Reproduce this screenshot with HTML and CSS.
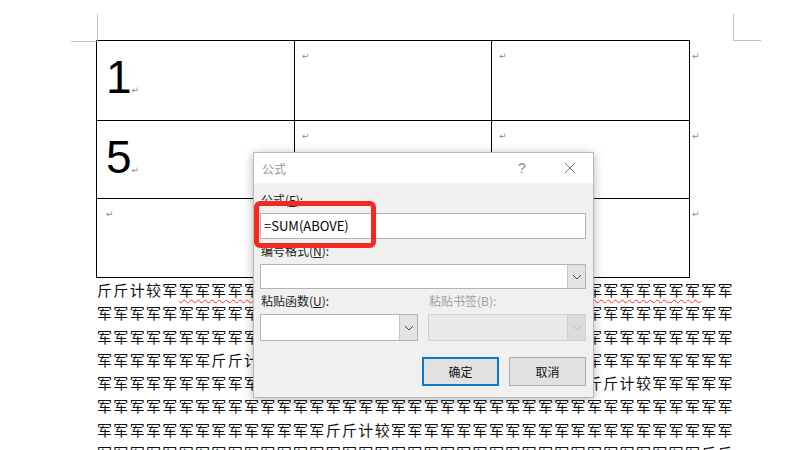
FILE: index.html
```html
<!DOCTYPE html>
<html lang="zh-CN">
<head>
    <meta charset="UTF-8">
    <title>公式</title>
    <link rel="stylesheet" href="styles.css">
</head>
<body>
    <div class="sheet">
        <div class="table-wrap">
            <div class="cells">
                <div class="cell cell-first big-cell"><span class="big">1</span><span class="mark">↵</span></div>
                <div class="cell"><span class="mark">↵</span></div>
                <div class="cell"><span class="mark">↵</span></div>
                <div class="cell cell-first big-cell row-2"><span class="big">5</span><span class="mark">↵</span></div>
                <div class="cell row-2"><span class="mark">↵</span></div>
                <div class="cell row-2"><span class="mark">↵</span></div>
                <div class="cell cell-first row-3"><span class="mark">↵</span></div>
                <div class="cell row-3"><span class="mark">↵</span></div>
                <div class="cell row-3"><span class="mark">↵</span></div>
            </div>
            <div class="row-ends">
                <div class="end end-1"><span class="mark">↵</span></div>
                <div class="end end-2"><span class="mark">↵</span></div>
                <div class="end end-3"><span class="mark">↵</span></div>
            </div>
        </div>

        <div class="body-text">
            <div class="line">斤斤计较军<span class="wavy">军军军军军军军军军军<!---->军军军军军军军军军军<!---->军军军军军军军军军军<!---->军军</span>军军</div>
            <div class="line">军军军军军军军军军军<!---->军军军军军军军军军军<!---->军军军军军军军军军军<!---->军军军军军<!---->军军军军</div>
            <div class="line">军军军军军军军军军军<!---->军军军军军军军军军军<!---->军军军军军军军军军军<!---->军军军军军<!---->军军军军</div>
            <div class="line">军军军军军<!---->军军<!---->斤斤计较<!---->军军军军军军军军军军<!---->军军军军军军军军军军<!---->军军军军军<!---->军军军</div>
            <div class="line">军军军军军军军军军军<!---->军军军军军军军军军军<!---->军军军军军军军军军军<!---->斤斤计较<!---->军军军军军</div>
            <div class="line">军军军军军军军军军军<!---->军军军军军军军军军军<!---->军军军军军军军军军军<!---->军军军军军<!---->军军军军</div>
            <div class="line">军军军军军军军军军军<!---->军军军军<!---->斤斤计较<!---->军军军军军军军军军军<!---->军军军军军军军军军军<!---->军</div>
            <div class="line">军军军军军军军军军军<!---->军军军军军军军军军军<!---->军军军军军军军军军军<!---->军军军军军<!---->军军<!---->斤斤</div>
        </div>
    </div>

    <div class="dialog">
        <div class="title-bar">
            <span class="title">公式</span>
            <span class="title-btn help">?</span>
            <span class="title-btn">
                <svg width="12" height="12" viewBox="0 0 12 12"><path d="M1 1 L11 11 M11 1 L1 11" stroke="#7a7a7a" stroke-width="1" fill="none"/></svg>
            </span>
        </div>
        <div class="dialog-body">
            <div class="label">公式(<u>F</u>):</div>
            <div class="field formula">=SUM(ABOVE)</div>

            <div class="label label-gap">编号格式(<u>N</u>):</div>
            <div class="field select">
                <span class="select-text"></span>
                <span class="drop">
                    <svg width="10" height="6" viewBox="0 0 10 6"><path d="M1 1 L5 5 L9 1" stroke="#444" fill="none"/></svg>
                </span>
            </div>

            <div class="pair label-gap">
                <div class="half">
                    <div class="label">粘贴函数(<u>U</u>):</div>
                    <div class="field select tall">
                        <span class="select-text"></span>
                        <span class="drop">
                            <svg width="10" height="6" viewBox="0 0 10 6"><path d="M1 1 L5 5 L9 1" stroke="#444" fill="none"/></svg>
                        </span>
                    </div>
                </div>
                <div class="half">
                    <div class="label disabled">粘贴书签(B):</div>
                    <div class="field select tall off">
                        <span class="select-text"></span>
                        <span class="drop">
                            <svg width="10" height="6" viewBox="0 0 10 6"><path d="M1 1 L5 5 L9 1" stroke="#bcbcbc" fill="none"/></svg>
                        </span>
                    </div>
                </div>
            </div>

            <div class="buttons">
                <button class="btn btn-default">确定</button>
                <button class="btn">取消</button>
            </div>
        </div>
        <div class="highlight"></div>
    </div>
</body>
</html>
```

FILE: styles.css
```css
*{
    margin: 0;
    padding: 0;
    box-sizing: border-box;
}

body{
    width: 800px;
    height: 450px;
    overflow: hidden;
    background: #ffffff;
    position: relative;
    font-family: "Noto Sans CJK SC", "Liberation Sans", sans-serif;
}

/* page with corner marks */
.sheet{
    margin-left: 96px;
    padding-top: 40px;
    width: 637px;
    position: relative;
}

.sheet::before{
    content: "";
    position: absolute;
    left: -25px;
    top: 14px;
    width: 26px;
    height: 27px;
    border-right: 1px solid #c4c4c4;
    border-bottom: 1px solid #c4c4c4;
}

.sheet::after{
    content: "";
    position: absolute;
    left: 637px;
    top: 14px;
    width: 27px;
    height: 26px;
    border-left: 1px solid #c4c4c4;
    border-bottom: 1px solid #c4c4c4;
}

/* table */
.table-wrap{
    display: flex;
}

.cells{
    display: grid;
    grid-template-columns: 198px 197px 198px;
    grid-template-rows: 80px 78px 79px;
    border-left: 1px solid #000;
    border-top: 1px solid #000;
}

.cell{
    border-right: 1px solid #000;
    border-bottom: 1px solid #000;
    padding: 5px 7px;
    line-height: 12px;
}

.cell-first{
    padding-left: 9px;
}

.big-cell{
    padding-top: 13px;
    line-height: 46px;
}

.big{
    font-family: "Liberation Sans", Arial, sans-serif;
    font-size: 46px;
    color: #000;
}

.mark{
    font-family: "DejaVu Sans", sans-serif;
    font-size: 9px;
    color: #8a8a8a;
}

.row-ends{
    display: flex;
    flex-direction: column;
    padding-top: 1px;
}

.end{
    padding: 5px 0 0 2px;
    line-height: 12px;
}

.end-1{
    height: 80px;
}

.end-2{
    height: 78px;
}

.end-3{
    height: 79px;
}

/* running text */
.body-text{
    padding-left: 1px;
}

.line{
    white-space: nowrap;
    font-size: 15px;
    letter-spacing: 1.33px;
    line-height: 23.3px;
    height: 23.3px;
    color: #111;
}

.wavy{
    text-decoration: underline wavy #f23030;
    text-decoration-thickness: 1px;
    text-underline-offset: 3px;
}

/* dialog */
.dialog{
    position: absolute;
    left: 253px;
    top: 152px;
    width: 341px;
    height: 246px;
    background: #f0f0f0;
    border: 1px solid #b9b9b9;
    box-shadow: 0 2px 10px rgba(0, 0, 0, 0.28);
    font-size: 12px;
    color: #222;
}

.title-bar{
    height: 30px;
    background: #ffffff;
    display: flex;
    align-items: center;
    padding-left: 8px;
}

.title{
    color: #9a9a9a;
    font-size: 12px;
    flex: 1;
}

.title-btn{
    width: 46px;
    height: 30px;
    display: flex;
    justify-content: center;
    align-items: center;
}

.help{
    margin-right: 2px;
    color: #8a8a8a;
    font-size: 14px;
    font-family: "Liberation Sans", sans-serif;
}

.dialog-body{
    padding: 9px 6px 0 6px;
}

.label{
    line-height: 16px;
    height: 16px;
    color: #222;
    padding-left: 1px;
}

.label-gap{
    margin-top: 4px;
}

.disabled{
    color: #a0a0a0;
}

.field{
    margin-top: 5px;
    height: 26px;
    background: #ffffff;
    border: 1px solid #b4b4b4;
}

.formula{
    width: 326px;
    font-size: 13px;
    line-height: 24px;
    padding-left: 3px;
    color: #000;
}

.select{
    width: 326px;
    height: 25px;
    display: flex;
}

.select-text{
    flex: 1;
}

.drop{
    width: 18px;
    background: #e3e3e3;
    border-left: 1px solid #c6c6c6;
    display: flex;
    justify-content: center;
    align-items: center;
}

.pair{
    display: flex;
    gap: 10px;
}

.half{
    width: 158px;
}

.tall{
    width: 158px;
    height: 27px;
}

.off{
    background: #e9e9e9;
    border-color: #d0d0d0;
}

.off .drop{
    background: #dcdcdc;
    border-left-color: #d0d0d0;
}

.buttons{
    display: flex;
    justify-content: flex-end;
    gap: 10px;
    margin-top: 16px;
    padding-right: 1px;
}

.btn{
    width: 77px;
    height: 29px;
    background: #e1e1e1;
    border: 1px solid #adadad;
    font-family: "Noto Sans CJK SC", sans-serif;
    font-size: 12px;
    color: #111;
}

.btn-default{
    border: 2px solid #0a78d4;
}

.highlight{
    position: absolute;
    left: 0;
    top: 48px;
    width: 122px;
    height: 47px;
    border: 5px solid #f42a22;
    border-radius: 6px;
}
```
